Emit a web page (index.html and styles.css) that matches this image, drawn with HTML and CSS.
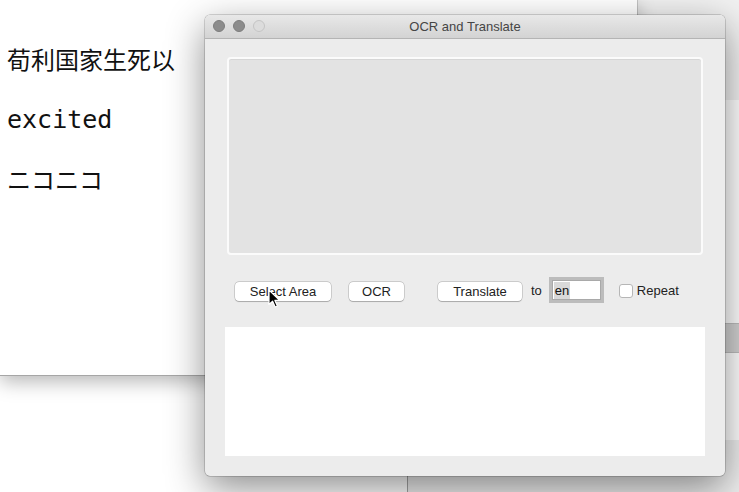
FILE: index.html
```html
<!DOCTYPE html>
<html>
<head>
<meta charset="utf-8">
<link rel="stylesheet" href="styles.css">
</head>
<body>
<div class="desktop">
  <div class="backwin backwin-top"></div>
  <div class="backwin backwin-bottom"></div>
  <div class="backwin backwin-side"></div>

  <div class="docwin">
    <div class="doc-line cjk">荀利国家生死以</div>
    <div class="doc-line mono">excited</div>
    <div class="doc-line cjk kana">ニコニコ</div>
  </div>

  <div class="appwin">
    <div class="titlebar">
      <div class="lights">
        <span class="light light-gray"></span>
        <span class="light light-gray"></span>
        <span class="light light-off"></span>
      </div>
      <div class="title">OCR and Translate</div>
    </div>
    <div class="appbody">
      <div class="preview"></div>
      <div class="controls">
        <button class="btn btn-select">Select Area</button>
        <button class="btn btn-ocr">OCR</button>
        <button class="btn btn-translate">Translate</button>
        <span class="to">to</span>
        <div class="lang"><span class="sel">en</span></div>
        <span class="check"></span>
        <span class="repeat">Repeat</span>
      </div>
      <div class="output"></div>
    </div>
  </div>

  <svg class="cursor" width="13" height="20" viewBox="0 0 13 20">
    <path d="M1 1 L1 15.5 L4.6 12.2 L7.2 18 L9.4 17 L6.9 11.4 L11.6 11.4 Z" fill="#000" stroke="#fff" stroke-width="1.2" stroke-linejoin="round"/>
  </svg>
</div>
</body>
</html>
```

FILE: styles.css
```css
html, body {
  margin: 0;
  padding: 0;
  background: #ffffff;
}

.desktop {
  position: relative;
  width: 739px;
  height: 492px;
  overflow: hidden;
  background: #ffffff;
  font-family: "Liberation Sans", Arial, sans-serif;
}

.backwin {
  position: absolute;
  box-sizing: border-box;
}

.backwin-top {
  left: 637px;
  top: -20px;
  width: 200px;
  height: 120px;
  background: #f1f1f1;
  border-left: 1px solid #cdcdcd;
}

.backwin-bottom {
  left: 407px;
  top: 440px;
  width: 400px;
  height: 100px;
  background: #eeeeee;
  border-left: 1px solid #a4a4a4;
}

.backwin-side {
  left: 715px;
  top: 323px;
  width: 40px;
  height: 30px;
  background: #d2d2d2;
  border-top: 1px solid #bdbdbd;
  border-bottom: 1px solid #bdbdbd;
}

.docwin {
  position: absolute;
  left: 0;
  top: 0;
  width: 637px;
  height: 376px;
  box-sizing: border-box;
  background: #ffffff;
  border-bottom: 1px solid #a6a6a6;
  box-shadow: 0 6px 18px rgba(0, 0, 0, 0.28);
  padding: 47px 0 0 7px;
  display: flex;
  flex-direction: column;
  color: #111111;
}

.doc-line {
  white-space: nowrap;
}

.cjk {
  font-family: "Noto Sans CJK SC", "Noto Sans CJK JP", sans-serif;
  font-size: 24px;
  line-height: 24px;
  height: 24px;
}

.mono {
  font-family: "DejaVu Sans Mono", monospace;
  font-size: 25px;
  line-height: 30px;
  height: 30px;
  margin-top: 34px;
}

.kana {
  margin-top: 32px;
}

.appwin {
  position: absolute;
  left: 205px;
  top: 15px;
  width: 520px;
  height: 461px;
  background: #ececec;
  border-radius: 5px;
  box-shadow: 0 0 0 0.5px rgba(0, 0, 0, 0.3), 0 12px 38px rgba(0, 0, 0, 0.45);
  display: flex;
  flex-direction: column;
  overflow: hidden;
}

.titlebar {
  position: relative;
  height: 23px;
  flex: none;
  background: linear-gradient(#e8e8e8, #d3d3d3);
  border-bottom: 1px solid #b4b4b4;
  display: flex;
  align-items: center;
  justify-content: center;
}

.lights {
  position: absolute;
  left: 8px;
  top: 5px;
  display: flex;
  gap: 8px;
}

.light {
  width: 12px;
  height: 12px;
  border-radius: 50%;
  box-sizing: border-box;
}

.light-gray {
  background: #8c8c8c;
  border: 1px solid #7d7d7d;
}

.light-off {
  background: #dcdcdc;
  border: 1px solid #c4c4c4;
}

.title {
  font-size: 13px;
  color: #454545;
}

.appbody {
  flex: 1;
  display: flex;
  flex-direction: column;
  padding: 18px 20px 20px 20px;
}

.preview {
  height: 198px;
  margin: 0 2px;
  box-sizing: border-box;
  border: 2px solid #fbfbfb;
  border-radius: 4px;
  background: #e3e3e3;
  box-shadow: inset 0 1px 0 #d6d6d6;
  flex: none;
}

.controls {
  margin-top: 22px;
  height: 26px;
  flex: none;
  display: flex;
  align-items: center;
  padding-left: 10px;
  font-size: 13px;
  color: #222222;
}

.btn {
  height: 19px;
  box-sizing: border-box;
  padding: 0;
  border: none;
  border-radius: 4px;
  background: #ffffff;
  box-shadow: 0 0 0 0.5px rgba(0, 0, 0, 0.25), 0 0.5px 1px rgba(0, 0, 0, 0.18);
  font-family: "Liberation Sans", Arial, sans-serif;
  font-size: 13px;
  color: #222222;
  margin-top: 3px;
}

.btn-select {
  width: 96px;
}

.btn-ocr {
  width: 55px;
  margin-left: 18px;
}

.btn-translate {
  width: 84px;
  margin-left: 34px;
}

.to {
  margin-left: 9px;
  margin-right: 7px;
}

.lang {
  width: 55px;
  height: 26px;
  box-sizing: border-box;
  border: 3px solid #bcbcbc;
  box-shadow: inset 0 0 0 1px #a9a9a9;
  background: #ffffff;
  padding-left: 2px;
  display: flex;
  align-items: center;
}

.sel {
  background: #d9d9d9;
  line-height: 17px;
  padding: 0 1px;
  color: #111111;
}

.check {
  width: 14px;
  height: 14px;
  box-sizing: border-box;
  margin-left: 15px;
  margin-top: 2px;
  border: 1px solid #b6b6b6;
  border-radius: 3px;
  background: #ffffff;
}

.repeat {
  margin-left: 4px;
}

.output {
  margin-top: 24px;
  flex: 1;
  background: #ffffff;
}

.cursor {
  position: absolute;
  left: 268px;
  top: 289px;
}
```
